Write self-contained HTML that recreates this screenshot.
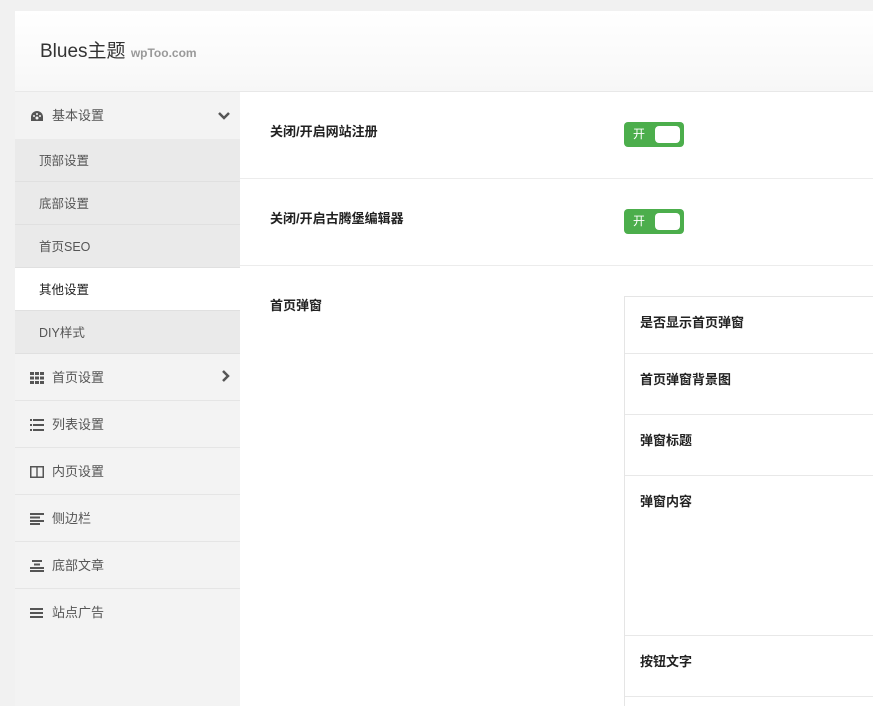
<!DOCTYPE html>
<html><head><meta charset="utf-8"><style>
*{margin:0;padding:0;box-sizing:border-box}
html,body{width:873px;height:706px;overflow:hidden}
body{background:#f1f1f1;font-family:"Liberation Sans","Noto Sans CJK SC",sans-serif;font-size:13px;color:#333}
.panel{position:absolute;left:15px;top:11px;width:858px;height:695px;background:#fff;overflow:hidden}
.hd{height:81px;background:linear-gradient(#fff,#f7f7f7);border-bottom:1px solid #e8e8e8;padding:25px 0 0 25px;font-size:19px;color:#333}
.hd small{font-size:12px;color:#999;font-weight:bold}
.side{position:absolute;left:0;top:81px;width:225px;height:614px;background:#f3f3f3}
.it{height:47px;line-height:48px;padding-left:37px;color:#555;font-size:13px;position:relative;border-bottom:1px solid #e5e5e5}
.it svg{position:absolute;left:15px;top:18px}
.sub{height:43px;line-height:44px;padding-left:24px;background:#eaeaea;color:#555;border-bottom:1px solid #e0e0e0;font-size:12.5px}
.sub.on{background:#fff;color:#222}
.arr{position:absolute;right:10px;top:0;font-weight:bold;color:#555}
.main{position:absolute;left:225px;top:81px;right:0;bottom:0}
.row{border-bottom:1px solid #ececec;position:relative}
.lab{position:absolute;left:30px;top:29px;font-weight:bold;color:#222}
.tg{position:absolute;left:384px;top:30px;width:60px;height:25px;background:#4cae4c;border-radius:4px;color:#fff;font-size:12px;line-height:25px;padding-left:9px}
.tg i{position:absolute;right:4px;top:4px;width:25px;height:17px;background:#fff;border-radius:4px}
.box{position:absolute;left:384px;top:204px;right:0;height:420px;border:1px solid #e5e5e5;border-right:none}
.br{border-bottom:1px solid #e8e8e8;position:relative}
.br b{position:absolute;left:15px;top:15px;color:#222}
</style></head><body>
<div class="panel">
<div class="hd">Blues主题 <small>wpToo.com</small></div>
<div class="side">
<div class="it" style="height:47px;border:none"><svg width="14" height="12" viewBox="0 0 14 12"><path d="M7 1A6 6 0 0 0 1 7v4h12V7A6 6 0 0 0 7 1z" fill="#555"/><circle cx="7" cy="8" r="1.5" fill="#f3f3f3"/><circle cx="4" cy="6" r="1" fill="#f3f3f3"/><circle cx="10" cy="6" r="1" fill="#f3f3f3"/><circle cx="7" cy="4" r="1" fill="#f3f3f3"/></svg>基本设置<span class="arr"><svg width="12" height="8" style="position:static"><path d="M1 1l5 5 5-5" stroke="#555" stroke-width="2.5" fill="none"/></svg></span></div>
<div class="sub">顶部设置</div><div class="sub">底部设置</div><div class="sub">首页SEO</div><div class="sub on">其他设置</div><div class="sub">DIY样式</div>
<div class="it"><svg width="14" height="12"><g fill="#555"><rect x="0" y="0" width="4" height="3"/><rect x="5" y="0" width="4" height="3"/><rect x="10" y="0" width="4" height="3"/><rect x="0" y="4.5" width="4" height="3"/><rect x="5" y="4.5" width="4" height="3"/><rect x="10" y="4.5" width="4" height="3"/><rect x="0" y="9" width="4" height="3"/><rect x="5" y="9" width="4" height="3"/><rect x="10" y="9" width="4" height="3"/></g></svg>首页设置<span class="arr"><svg width="8" height="12" style="position:static"><path d="M1 1l5 5-5 5" stroke="#555" stroke-width="2.5" fill="none"/></svg></span></div>
<div class="it"><svg width="14" height="12"><g fill="#555"><rect x="0" y="0" width="2" height="2"/><rect x="3" y="0" width="11" height="2"/><rect x="0" y="5" width="2" height="2"/><rect x="3" y="5" width="11" height="2"/><rect x="0" y="10" width="2" height="2"/><rect x="3" y="10" width="11" height="2"/></g></svg>列表设置</div>
<div class="it"><svg width="14" height="12"><rect x="0.75" y="0.75" width="12.5" height="10.5" fill="none" stroke="#555" stroke-width="1.5"/><rect x="6.3" y="1" width="1.4" height="10" fill="#555"/></svg>内页设置</div>
<div class="it"><svg width="14" height="12"><g fill="#555"><rect x="0" y="0" width="14" height="2"/><rect x="0" y="3.5" width="10" height="2"/><rect x="0" y="7" width="14" height="2"/><rect x="0" y="10" width="10" height="2"/></g></svg>侧边栏</div>
<div class="it"><svg width="14" height="12"><g fill="#555"><rect x="2" y="0" width="10" height="2"/><rect x="4" y="3.5" width="6" height="2"/><rect x="0" y="7" width="14" height="2"/><rect x="0" y="10" width="14" height="2"/></g></svg>底部文章</div>
<div class="it" style="border:none"><svg width="14" height="12"><g fill="#555"><rect x="0" y="1" width="13" height="2"/><rect x="0" y="5" width="13" height="2"/><rect x="0" y="9" width="13" height="2"/></g></svg>站点广告</div>
</div>
<div class="main">
<div class="row" style="height:87px"><div class="lab">关闭/开启网站注册</div><div class="tg">开<i></i></div></div>
<div class="row" style="height:87px"><div class="lab">关闭/开启古腾堡编辑器</div><div class="tg">开<i></i></div></div>
<div style="position:relative"><div class="lab">首页弹窗</div></div>
<div class="box">
<div class="br" style="height:57px"><b>是否显示首页弹窗</b></div>
<div class="br" style="height:61px"><b>首页弹窗背景图</b></div>
<div class="br" style="height:61px"><b>弹窗标题</b></div>
<div class="br" style="height:160px"><b>弹窗内容</b></div>
<div class="br" style="height:61px"><b>按钮文字</b></div>
</div>
</div>
</div>
</body></html>
